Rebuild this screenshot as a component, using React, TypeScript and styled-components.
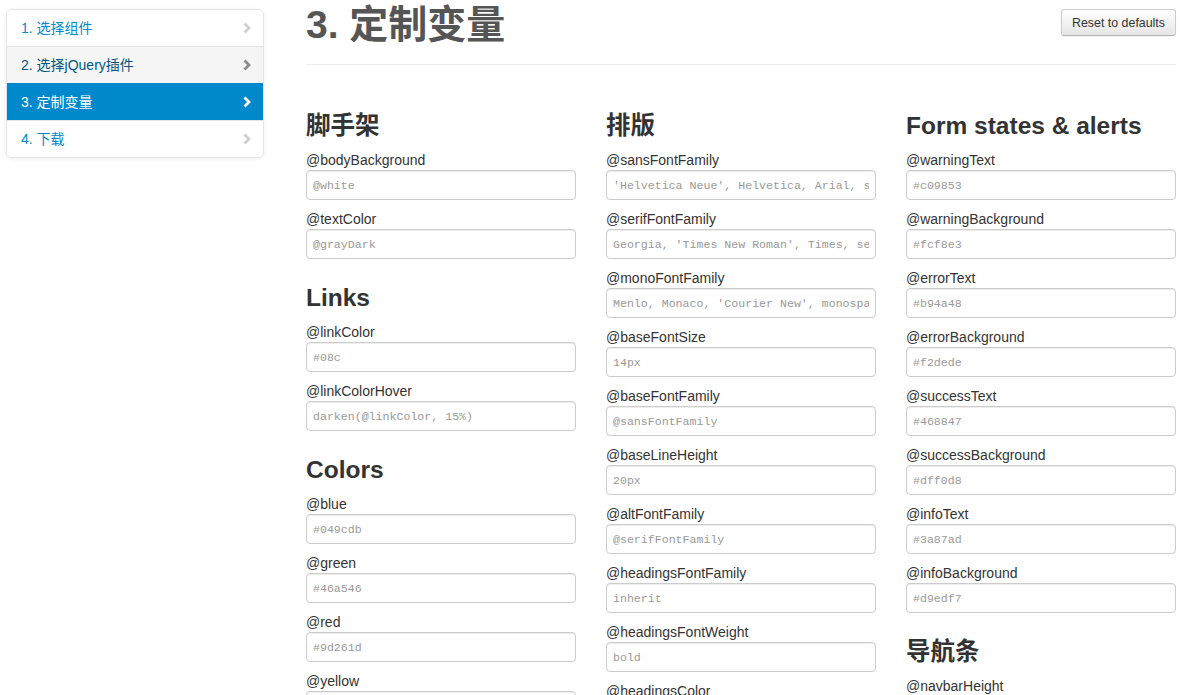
import React from "react";
import styled, { createGlobalStyle } from "styled-components";

const Global = createGlobalStyle`
  html, body { margin: 0; padding: 0; overflow: hidden; background: #fff; }
  body {
    font-family: "Liberation Sans", Arial, "Noto Sans CJK SC", sans-serif;
    font-size: 14px;
    line-height: 20px;
    color: #333;
  }
  * { box-sizing: border-box; }
`;

const Page = styled.div`
  display: flex;
  align-items: flex-start;
  gap: 42px;
  padding: 0 6px 0 6px;
  width: 1182px;
  height: 695px;
`;

const SideNav = styled.ul`
  list-style: none;
  margin: 9px 0 0 0;
  padding: 0;
  width: 258px;
  flex: none;
  background: #fff;
  border: 1px solid #e5e5e5;
  border-radius: 6px;
  box-shadow: 0 1px 4px rgba(0, 0, 0, 0.065);
  overflow: hidden;
`;

type NavState = "normal" | "hover" | "active";

const NavItem = styled.li<{ $state: NavState }>`
  display: flex;
  align-items: center;
  justify-content: space-between;
  height: 37px;
  padding: 0 11px 0 14px;
  border-top: 1px solid ${(p) => (p.$state === "active" ? "#0088cc" : "#e5e5e5")};
  &:first-child { border-top: 0; height: 36px; }
  background: ${(p) =>
    p.$state === "active" ? "#0088cc" : p.$state === "hover" ? "#f5f5f5" : "#fff"};
  color: ${(p) =>
    p.$state === "active" ? "#fff" : p.$state === "hover" ? "#005580" : "#0088cc"};
  font-size: 14px;
`;

const Chevron = styled.svg<{ $state: NavState }>`
  width: 10px;
  height: 12px;
  color: ${(p) =>
    p.$state === "active" ? "#fff" : p.$state === "hover" ? "#8a8a8a" : "#cfcfcf"};
`;

const Main = styled.div`
  width: 870px;
  flex: none;
`;

const Header = styled.div`
  display: flex;
  justify-content: space-between;
  align-items: flex-start;
  padding-bottom: 14px;
  border-bottom: 1px solid #eeeeee;
`;

const Title = styled.h1`
  margin: 0;
  font-size: 39px;
  line-height: 50px;
  font-weight: bold;
  color: #555;
`;

const ResetButton = styled.button`
  margin-top: 9px;
  height: 27px;
  padding: 0 10px;
  font-family: "Liberation Sans", Arial, sans-serif;
  font-size: 12.4px;
  color: #333;
  background: linear-gradient(#ffffff, #e6e6e6);
  border: 1px solid #cccccc;
  border-bottom-color: #b3b3b3;
  border-radius: 3px;
  box-shadow: inset 0 1px 0 rgba(255, 255, 255, 0.2), 0 1px 2px rgba(0, 0, 0, 0.05);
`;

const Columns = styled.div`
  display: grid;
  grid-template-columns: repeat(3, 270px);
  column-gap: 30px;
  padding-top: 41px;
`;

const Column = styled.div`
  display: flex;
  flex-direction: column;
`;

const SectionTitle = styled.h3`
  margin: 10px 0 4px 0;
  font-size: 24.5px;
  line-height: 40px;
  font-weight: bold;
  color: #333;
  &:first-child { margin-top: 0; }
`;

const Label = styled.label`
  display: block;
  font-size: 14px;
  line-height: 20px;
  color: #333;
`;

const Field = styled.input`
  display: block;
  width: 270px;
  height: 30px;
  margin: 0 0 9px 0;
  padding: 0 6px;
  border: 1px solid #cccccc;
  border-radius: 4px;
  box-shadow: inset 0 1px 1px rgba(0, 0, 0, 0.075);
  font-family: "Liberation Mono", "Courier New", monospace;
  font-size: 11.6px;
  color: #555;
  background: #fff;
  outline: none;
  &::placeholder { color: #999; }
`;

type Section = { title: string; vars: [string, string][] };

const columns: Section[][] = [
  [
    { title: "脚手架", vars: [["@bodyBackground", "@white"], ["@textColor", "@grayDark"]] },
    { title: "Links", vars: [["@linkColor", "#08c"], ["@linkColorHover", "darken(@linkColor, 15%)"]] },
    {
      title: "Colors",
      vars: [
        ["@blue", "#049cdb"],
        ["@green", "#46a546"],
        ["@red", "#9d261d"],
        ["@yellow", "#ffc40d"],
        ["@orange", "#f89406"],
      ],
    },
  ],
  [
    {
      title: "排版",
      vars: [
        ["@sansFontFamily", "'Helvetica Neue', Helvetica, Arial, sans-serif"],
        ["@serifFontFamily", "Georgia, 'Times New Roman', Times, serif"],
        ["@monoFontFamily", "Menlo, Monaco, 'Courier New', monospace"],
        ["@baseFontSize", "14px"],
        ["@baseFontFamily", "@sansFontFamily"],
        ["@baseLineHeight", "20px"],
        ["@altFontFamily", "@serifFontFamily"],
        ["@headingsFontFamily", "inherit"],
        ["@headingsFontWeight", "bold"],
        ["@headingsColor", "inherit"],
      ],
    },
  ],
  [
    {
      title: "Form states & alerts",
      vars: [
        ["@warningText", "#c09853"],
        ["@warningBackground", "#fcf8e3"],
        ["@errorText", "#b94a48"],
        ["@errorBackground", "#f2dede"],
        ["@successText", "#468847"],
        ["@successBackground", "#dff0d8"],
        ["@infoText", "#3a87ad"],
        ["@infoBackground", "#d9edf7"],
      ],
    },
    { title: "导航条", vars: [["@navbarHeight", "40px"], ["@navbarBackground", "#fafafa"]] },
  ],
];

const navItems: { text: string; state: NavState }[] = [
  { text: "1. 选择组件", state: "normal" },
  { text: "2. 选择jQuery插件", state: "hover" },
  { text: "3. 定制变量", state: "active" },
  { text: "4. 下载", state: "normal" },
];

export default function App() {
  return (
    <>
      <Global />
      <Page>
        <SideNav>
          {navItems.map((n) => (
            <NavItem key={n.text} $state={n.state}>
              <span>{n.text}</span>
              <Chevron $state={n.state} viewBox="0 0 10 12">
                <path d="M2.5 1.5 L7 6 L2.5 10.5" fill="none" stroke="currentColor" strokeWidth="2.8" />
              </Chevron>
            </NavItem>
          ))}
        </SideNav>
        <Main>
          <Header>
            <Title>3. 定制变量</Title>
            <ResetButton>Reset to defaults</ResetButton>
          </Header>
          <Columns>
            {columns.map((col, ci) => (
              <Column key={ci}>
                {col.map((sec) => (
                  <React.Fragment key={sec.title}>
                    <SectionTitle>{sec.title}</SectionTitle>
                    {sec.vars.map(([name, val]) => (
                      <React.Fragment key={name}>
                        <Label>{name}</Label>
                        <Field type="text" placeholder={val} />
                      </React.Fragment>
                    ))}
                  </React.Fragment>
                ))}
              </Column>
            ))}
          </Columns>
        </Main>
      </Page>
    </>
  );
}
